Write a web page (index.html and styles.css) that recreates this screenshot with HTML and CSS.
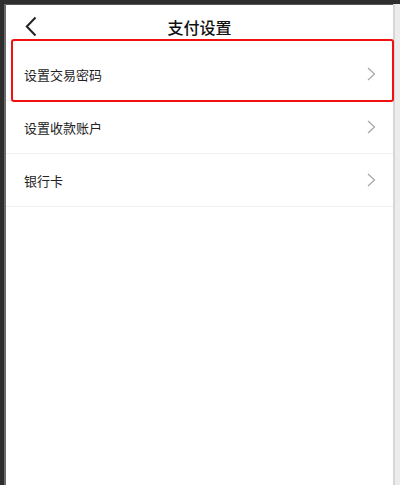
FILE: index.html
```html
<!DOCTYPE html>
<html lang="zh-CN">
<head>
    <meta charset="UTF-8">
    <meta name="viewport" content="width=device-width, initial-scale=1.0">
    <title>支付设置</title>
    <link rel="stylesheet" href="styles.css">
</head>
<body>

<div class="device">
    <div class="edge-left"></div>

    <div class="screen">
        <!-- Header -->
        <div class="header">
            <span class="back">
                <svg width="12" height="21" viewBox="0 0 12 21">
                    <polyline points="10.5,1.5 1.8,10.5 10.5,19.5" fill="none" stroke="#222" stroke-width="2"/>
                </svg>
            </span>
            <h1 class="title">支付设置</h1>
        </div>

        <!-- Settings list -->
        <ul class="menu">
            <li class="menu-item">
                <span>设置交易密码</span>
                <svg class="arrow" width="9" height="14" viewBox="0 0 9 14">
                    <polyline points="1,1 7.5,7 1,13" fill="none" stroke="#a6a6a6" stroke-width="1.2"/>
                </svg>
            </li>
            <li class="menu-item">
                <span>设置收款账户</span>
                <svg class="arrow" width="9" height="14" viewBox="0 0 9 14">
                    <polyline points="1,1 7.5,7 1,13" fill="none" stroke="#a6a6a6" stroke-width="1.2"/>
                </svg>
            </li>
            <li class="menu-item">
                <span>银行卡</span>
                <svg class="arrow" width="9" height="14" viewBox="0 0 9 14">
                    <polyline points="1,1 7.5,7 1,13" fill="none" stroke="#a6a6a6" stroke-width="1.2"/>
                </svg>
            </li>
        </ul>

        <!-- Highlight box over first item -->
        <div class="highlight"></div>
    </div>

    <div class="edge-right"></div>
</div>

</body>
</html>
```

FILE: styles.css
```css
* {
    box-sizing: border-box;
}

body {
    margin: 0;
    padding: 0;
    font-family: 'Noto Sans CJK SC', 'Noto Sans', sans-serif;
    background-color: #2e2e2e;
}

.device {
    display: flex;
    height: 485px;
    padding-top: 4px;
    background-color: #2e2e2e;
}

.edge-left {
    width: 6px;
    background-color: #2e2e2e;
    border-right: 2px solid #6a6a6a;
}

.screen {
    position: relative;
    flex: 1;
    background-color: #fff;
    border-top: 1px solid #555;
}

.edge-right {
    width: 7px;
    background-color: #ececec;
    border-left: 2px solid #d6d6d6;
}

.header {
    position: relative;
    display: flex;
    align-items: center;
    justify-content: center;
    height: 43px;
}

.back {
    position: absolute;
    left: 19px;
    top: 11px;
    display: flex;
}

.title {
    margin: 0;
    font-size: 16px;
    font-weight: 500;
    color: #111;
    letter-spacing: 0;
}

.menu {
    list-style: none;
    margin: 0;
    padding: 0;
}

.menu-item {
    display: flex;
    align-items: center;
    justify-content: space-between;
    height: 53px;
    padding: 0 17px 0 18px;
    border-bottom: 1px solid #efefef;
    font-size: 13px;
    color: #222;
}

.arrow {
    display: block;
}

/* Red annotation box */
.highlight {
    position: absolute;
    left: 5px;
    top: 34px;
    width: 383px;
    height: 63px;
    border: 2px solid #f01010;
    border-radius: 3px;
}
```
